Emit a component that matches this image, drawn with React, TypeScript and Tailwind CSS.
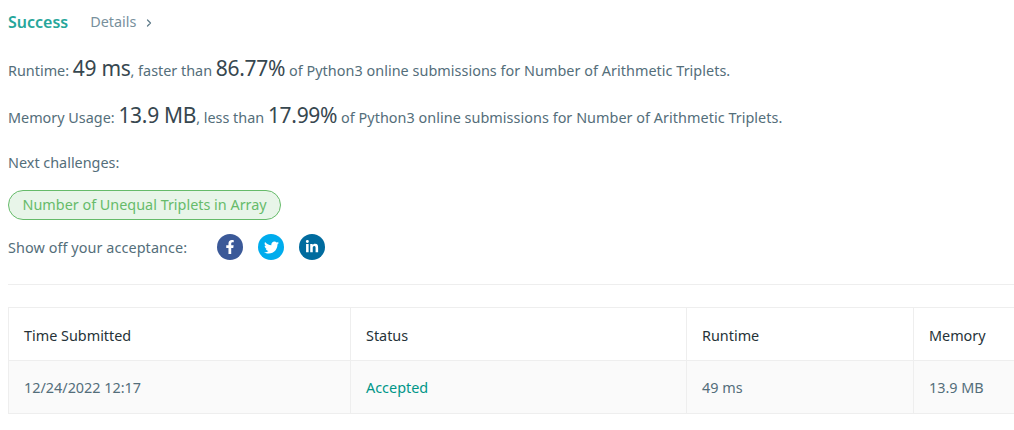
import { ChevronRight } from "lucide-react";
import { FaFacebookF, FaLinkedinIn, FaTwitter } from "react-icons/fa";

function Stat({ label, value, middle, percent }: { label: string; value: string; middle: string; percent: string }) {
  return (
    <p className="h-[24px] flex items-baseline whitespace-pre text-[14.4px] text-[#546e7a] leading-[24px]">
      {label}
      <span className="text-[21px] tracking-[-0.3px] text-[#37474f]">{value}</span>
      {middle}
      <span className="text-[21px] tracking-[-0.3px] text-[#37474f]">{percent}</span>
      <span className="tracking-[0.04px]">{" of Python3 online submissions for Number of Arithmetic Triplets."}</span>
    </p>
  );
}

export default function App() {
  return (
    <div className="w-[1014px] h-[430px] overflow-hidden bg-white pl-2 font-['Noto_Sans',sans-serif]">
      <div className="flex items-center h-[22px] mt-[11px]">
        <span className="text-[16px] font-semibold text-[#26a69a]">Success</span>
        <span className="ml-[22px] text-[14.4px] text-[#78909c]">Details</span>
        <ChevronRight size={12} strokeWidth={2.5} className="ml-[7px] mt-[2px] text-[#607d8b]" />
      </div>
      <div className="mt-[23px]">
        <Stat label="Runtime: " value="49 ms" middle=", faster than " percent="86.77%" />
      </div>
      <div className="mt-[23px]">
        <Stat label="Memory Usage: " value="13.9 MB" middle=", less than " percent="17.99%" />
      </div>
      <p className="mt-[26px] text-[14.4px] leading-[20px] text-[#546e7a]">Next challenges:</p>
      <div className="mt-[17px]">
        <span className="inline-flex items-center h-[30px] px-[13.5px] rounded-full border border-[#66bb6a] bg-[#e8f5e9] text-[14.4px] text-[#66bb6a]">
          Number of Unequal Triplets in Array
        </span>
      </div>
      <div className="flex items-center mt-[14px] h-[26px]">
        <span className="text-[14.4px] tracking-[0.08px] pt-[2px] text-[#546e7a] w-[209px]">Show off your acceptance:</span>
        <div className="flex gap-[15px]">
          <a className="w-[26px] h-[26px] rounded-full bg-[#3b5998] text-white flex items-center justify-center"><FaFacebookF size={14} /></a>
          <a className="w-[26px] h-[26px] rounded-full bg-[#00aced] text-white flex items-center justify-center"><FaTwitter size={15} /></a>
          <a className="w-[26px] h-[26px] rounded-full bg-[#006b9e] text-white flex items-center justify-center"><FaLinkedinIn size={14} /></a>
        </div>
      </div>
      <div className="mt-[24px] border-t border-[#eeeeee] h-px" />
      <table className="mt-[22px] w-[1040px] table-fixed border-collapse text-[14.4px]">
        <colgroup>
          <col className="w-[342px]" />
          <col className="w-[336px]" />
          <col className="w-[227px]" />
          <col />
        </colgroup>
        <tbody>
          <tr className="h-[53px] text-[#263238]">
            <td className="border border-[#eeeeee] pl-[15px] pt-[3px]">Time Submitted</td>
            <td className="border border-[#eeeeee] pl-[15px] pt-[3px]">Status</td>
            <td className="border border-[#eeeeee] pl-[15px] pt-[3px]">Runtime</td>
            <td className="border border-[#eeeeee] pl-[15px] pt-[3px]">Memory</td>
          </tr>
          <tr className="h-[53px] bg-[#fafafa] text-[#546e7a]">
            <td className="border border-[#eeeeee] pl-[15px] pt-[2px]">12/24/2022 12:17</td>
            <td className="border border-[#eeeeee] pl-[15px] pt-[2px] text-[#009688]">Accepted</td>
            <td className="border border-[#eeeeee] pl-[15px] pt-[2px]">49 ms</td>
            <td className="border border-[#eeeeee] pl-[15px] pt-[2px]">13.9 MB</td>
          </tr>
        </tbody>
      </table>
    </div>
  );
}
